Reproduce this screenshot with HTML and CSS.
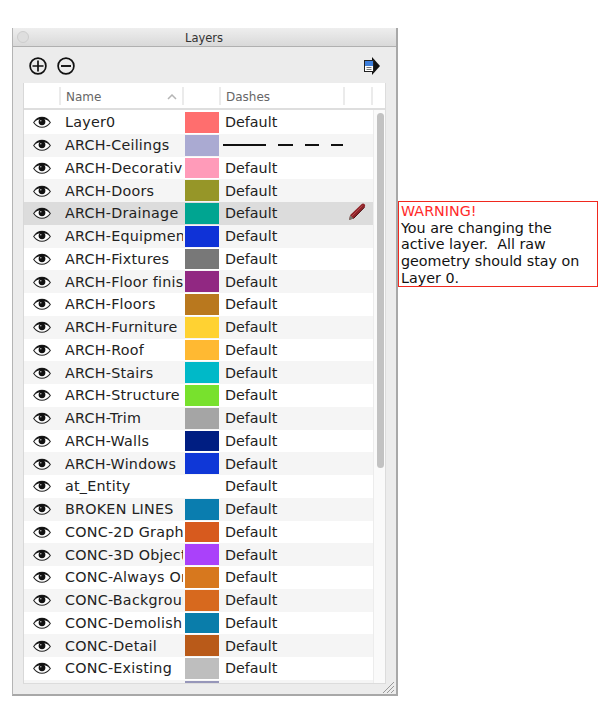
FILE: index.html
```html
<!DOCTYPE html>
<html lang="en">
<head>
<meta charset="utf-8">
<title>Layers</title>
<link rel="stylesheet" href="styles.css">
</head>
<body>
<svg class="defs" width="0" height="0" aria-hidden="true">
  <symbol id="eye" viewBox="0 0 18 12">
    <path d="M.7 6.500C3 3 5.800 1.400 9 1.400s6 1.600 8.300 5.100C15 9.800 12.200 11.200 9 11.200S3 9.800.7 6.500Z" fill="#fff" stroke="#222" stroke-width="1.100"/>
    <path d="M1.500 5.800C3.500 2.900 6 1.200 9 1.200s5.500 1.700 7.500 4.600C14.500 4 12 3 9 3S3.500 4 1.500 5.800Z" fill="#111"/>
    <circle cx="9" cy="5.800" r="3.400" fill="#111"/>
    <circle cx="7.800" cy="4.700" r=".8" fill="#bbb"/>
  </symbol>
</svg>
<main class="stage">
  <section class="window">
    <header class="titlebar"><span class="light"></span><span class="title">Layers</span></header>
    <div class="toolbar">
      <svg class="tool" width="20" height="20" viewBox="0 0 20 20"><circle cx="10" cy="10" r="7.900" fill="none" stroke="#111" stroke-width="1.700"/><path d="M4.500 10h11M10 4.500v11" stroke="#111" stroke-width="1.700"/></svg>
      <svg class="tool" width="20" height="20" viewBox="0 0 20 20"><circle cx="10" cy="10" r="7.900" fill="none" stroke="#111" stroke-width="1.700"/><path d="M5 10h10" stroke="#111" stroke-width="1.900"/></svg>
      <svg class="details" width="18" height="20" viewBox="0 0 18 20"><path d="M9 1l8 9-8 9z" fill="#111"/><rect x="1.500" y="4.500" width="9" height="11" fill="#fff" stroke="#222"/><rect x="2" y="5" width="8" height="5" fill="#3d7fdc"/><path d="M3.500 11.500h5M3.500 13.500h5" stroke="#777"/></svg>
    </div>
    <div class="table">
      <div class="thead">
        <span class="th th-eye"></span>
        <span class="th th-name">Name<svg class="sort" width="10" height="6" viewBox="0 0 10 6"><path d="M1 5l4-4 4 4" fill="none" stroke="#b5b5b5" stroke-width="1.500"/></svg></span>
        <span class="th th-color"></span>
        <span class="th th-dash">Dashes</span>
        <span class="th th-edit"></span>
        <span class="th th-last"></span>
      </div>
      <div class="body">
        <div class="rows">
          <div class="row"><svg class="eye"><use href="#eye"/></svg><span class="name">Layer0</span><span class="swatch c0"></span><span class="dash">Default</span></div>
          <div class="row"><svg class="eye"><use href="#eye"/></svg><span class="name">ARCH-Ceilings</span><span class="swatch c1"></span><span class="dash"><svg class="pattern" width="122" height="4" viewBox="0 0 122 4"><path d="M1 2h43M56 2h15M83 2h14M109 2h12" stroke="#111" stroke-width="2"/></svg></span></div>
          <div class="row"><svg class="eye"><use href="#eye"/></svg><span class="name">ARCH-Decorative</span><span class="swatch c2"></span><span class="dash">Default</span></div>
          <div class="row"><svg class="eye"><use href="#eye"/></svg><span class="name">ARCH-Doors</span><span class="swatch c3"></span><span class="dash">Default</span></div>
          <div class="row active"><svg class="eye"><use href="#eye"/></svg><span class="name">ARCH-Drainage</span><span class="swatch c4"></span><span class="dash">Default</span><svg class="pencil" width="20" height="20" viewBox="0 0 20 20"><path d="M2 18l1.200-5L14.500 2.200c1-.9 2.300-.8 3.100.1.800.9.800 2.100-.1 3L6.500 16.500z" fill="#8f2429"/><path d="M2 18l1.200-5 3.300 3.500z" fill="#77776e"/><path d="M4.500 14.500L15.500 3.500" stroke="#bd4f54" stroke-width=".8"/><path d="M6.500 16.500L17.500 5.300" stroke="#4a1114" stroke-width="1"/></svg></div>
          <div class="row"><svg class="eye"><use href="#eye"/></svg><span class="name">ARCH-Equipment</span><span class="swatch c5"></span><span class="dash">Default</span></div>
          <div class="row"><svg class="eye"><use href="#eye"/></svg><span class="name">ARCH-Fixtures</span><span class="swatch c6"></span><span class="dash">Default</span></div>
          <div class="row"><svg class="eye"><use href="#eye"/></svg><span class="name">ARCH-Floor finish</span><span class="swatch c7"></span><span class="dash">Default</span></div>
          <div class="row"><svg class="eye"><use href="#eye"/></svg><span class="name">ARCH-Floors</span><span class="swatch c8"></span><span class="dash">Default</span></div>
          <div class="row"><svg class="eye"><use href="#eye"/></svg><span class="name">ARCH-Furniture</span><span class="swatch c9"></span><span class="dash">Default</span></div>
          <div class="row"><svg class="eye"><use href="#eye"/></svg><span class="name">ARCH-Roof</span><span class="swatch c10"></span><span class="dash">Default</span></div>
          <div class="row"><svg class="eye"><use href="#eye"/></svg><span class="name">ARCH-Stairs</span><span class="swatch c11"></span><span class="dash">Default</span></div>
          <div class="row"><svg class="eye"><use href="#eye"/></svg><span class="name">ARCH-Structure</span><span class="swatch c12"></span><span class="dash">Default</span></div>
          <div class="row"><svg class="eye"><use href="#eye"/></svg><span class="name">ARCH-Trim</span><span class="swatch c13"></span><span class="dash">Default</span></div>
          <div class="row"><svg class="eye"><use href="#eye"/></svg><span class="name">ARCH-Walls</span><span class="swatch c14"></span><span class="dash">Default</span></div>
          <div class="row"><svg class="eye"><use href="#eye"/></svg><span class="name">ARCH-Windows</span><span class="swatch c15"></span><span class="dash">Default</span></div>
          <div class="row"><svg class="eye"><use href="#eye"/></svg><span class="name">at_Entity</span><span class="swatch c16"></span><span class="dash">Default</span></div>
          <div class="row"><svg class="eye"><use href="#eye"/></svg><span class="name">BROKEN LINES</span><span class="swatch c17"></span><span class="dash">Default</span></div>
          <div class="row"><svg class="eye"><use href="#eye"/></svg><span class="name">CONC-2D Graphics</span><span class="swatch c18"></span><span class="dash">Default</span></div>
          <div class="row"><svg class="eye"><use href="#eye"/></svg><span class="name">CONC-3D Objects</span><span class="swatch c19"></span><span class="dash">Default</span></div>
          <div class="row"><svg class="eye"><use href="#eye"/></svg><span class="name">CONC-Always On</span><span class="swatch c20"></span><span class="dash">Default</span></div>
          <div class="row"><svg class="eye"><use href="#eye"/></svg><span class="name">CONC-Background</span><span class="swatch c21"></span><span class="dash">Default</span></div>
          <div class="row"><svg class="eye"><use href="#eye"/></svg><span class="name">CONC-Demolish</span><span class="swatch c22"></span><span class="dash">Default</span></div>
          <div class="row"><svg class="eye"><use href="#eye"/></svg><span class="name">CONC-Detail</span><span class="swatch c23"></span><span class="dash">Default</span></div>
          <div class="row"><svg class="eye"><use href="#eye"/></svg><span class="name">CONC-Existing</span><span class="swatch c24"></span><span class="dash">Default</span></div>
          <div class="row"><span class="eye"></span><span class="name"></span><span class="swatch c25"></span><span class="dash"></span></div>
        </div>
        <div class="gutter"><div class="thumb"></div></div>
      </div>
    </div>
    <svg class="grip" width="13" height="13" viewBox="0 0 13 13"><path d="M1 12L12 1M5 12l7-7M9 12l3-3" stroke="#999" stroke-width="1"/></svg>
  </section>
  <aside class="warning">
    <span class="warning-head">WARNING!</span><br>
    You are changing the active layer.&nbsp; All raw geometry should stay on Layer 0.
  </aside>
</main>
</body>
</html>
```

FILE: styles.css
```css
* { box-sizing: border-box; }
html, body { margin: 0; background: #fff; }
.defs { position: absolute; }
.stage { display: flex; align-items: flex-start; padding: 28px 0 0 12px; height: 716px; overflow: hidden; }

.window {
  position: relative;
  width: 386px;
  height: 668px;
  background: #ececec;
  border: 1px solid #b4b4b4;
  border-top: 0;
  border-right: 2px solid #a8a8a8;
  border-bottom: 2px solid #a8a8a8;
  display: flex;
  flex-direction: column;
  font-family: "DejaVu Sans", sans-serif;
  color: #222;
}
.titlebar {
  position: relative;
  height: 19px;
  flex: none;
  display: flex;
  align-items: center;
  justify-content: center;
  padding: 2px 1px 0 0;
  background: linear-gradient(#eeeeee, #d9d9d9);
  border-bottom: 1px solid #b0b0b0;
}
.title { font-size: 11.500px; color: #333; }
.light { position: absolute; left: 4px; top: 3px; width: 12px; height: 12px; border-radius: 50%; background: #dedede; border: 1px solid #cdcdcd; }

.toolbar { height: 36px; flex: none; display: flex; align-items: center; padding: 2px 15px 0 15px; gap: 8px; }
.details { margin-left: auto; }

.table { width: 363px; margin-left: 10px; height: 601px; flex: none; background: #fff; border: 1px solid #dcdcdc; border-top: 0; border-left: 1px solid #d8d8d8; display: flex; flex-direction: column; overflow: hidden; }
.thead { height: 27px; flex: none; display: flex; padding-top: 4px; padding-bottom: 3px; border-bottom: 2px solid #dedede; align-items: stretch; font-size: 12px; color: #666; }
.th { display: flex; align-items: center; border-right: 2px solid #ebebeb; padding: 1px 0 0 5px; }
.th-eye { width: 37px; }
.th-name { width: 123px; justify-content: space-between; padding-right: 5px; }
.th-color { width: 37px; }
.th-dash { width: 124px; }
.th-edit { width: 28px; }
.th-last { flex: 1; border-right: 0; }

.body { flex: 1; display: flex; min-height: 0; overflow: hidden; }
.rows { width: 349px; flex: none; padding-top: 1px; }
.row { height: 22.750px; display: flex; align-items: center; position: relative; background: #fff; font-size: 14.300px; color: #222; }
.row:nth-child(even) { background: #f5f5f5; }
.row.active { background: #dcdcdc; }
.eye { width: 18px; height: 12px; margin-left: 9px; flex: none; }
.name { width: 118px; margin-left: 14px; white-space: nowrap; overflow: hidden; flex: none; letter-spacing: .25px; }
.swatch { width: 34px; height: calc(100% - 2px); margin-left: 2px; flex: none; }
.dash { margin-left: 6px; }
.pattern { display: block; margin-left: -3px; }
.pencil { position: absolute; left: 323px; top: 0; }
.gutter { flex: 1; background: #fafafa; border-left: 1px solid #ececec; padding: 3px 3px 0 3px; }
.thumb { width: 7px; height: 355px; border-radius: 4px; background: #c2c2c2; }

.grip { position: absolute; right: 1px; bottom: 0; }

.c0 { background: #ff6e6e; } .c1 { background: #aaaad2; } .c2 { background: #ff9bb9; }
.c3 { background: #969628; } .c4 { background: #00a591; } .c5 { background: #0f32d7; }
.c6 { background: #787878; } .c7 { background: #912882; } .c8 { background: #b9781e; }
.c9 { background: #ffd232; } .c10 { background: #ffb932; } .c11 { background: #00b9c8; }
.c12 { background: #78e12d; } .c13 { background: #a5a5a5; } .c14 { background: #001e82; }
.c15 { background: #0f37d7; } .c16 { background: #fff; } .c17 { background: #0a7daf; }
.c18 { background: #d75a1e; } .c19 { background: #aa41fa; } .c20 { background: #d7781e; }
.c21 { background: #d7691e; } .c22 { background: #0a7daa; } .c23 { background: #b95a19; }
.c24 { background: #bebebe; } .c25 { background: #9696b9; }

.warning {
  width: 200px;
  height: 86px;
  margin-top: 173px;
  padding: 1px 1px 0 2px;
  border: 1px solid #f0281e;
  font-family: "DejaVu Sans", Verdana, sans-serif;
  font-size: 14.300px;
  line-height: 16.700px;
  color: #111;
}
.warning-head { color: #ff2a2a; }
```
